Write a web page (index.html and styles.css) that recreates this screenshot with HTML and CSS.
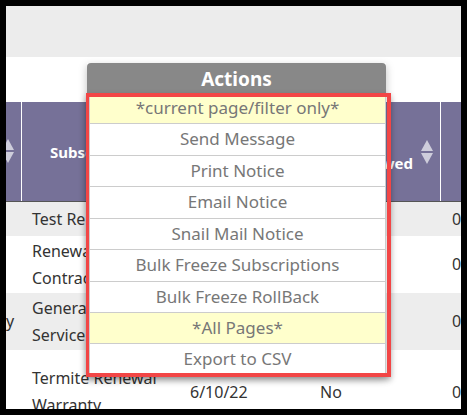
FILE: index.html
```html
<!DOCTYPE html>
<html>
<head>
<meta charset="utf-8">
<link rel="stylesheet" href="styles.css">
</head>
<body>
<div class="frame">
  <div class="topband"></div>
  <div class="spacer"></div>
  <div class="table">
    <div class="thead">
      <div class="th c1"><span class="sort"></span></div>
      <div class="th c2"><span class="htext">Subscription</span></div>
      <div class="th c3"></div>
      <div class="th c4"><span class="htext">Auto<br>Renewed</span><span class="sort"></span></div>
      <div class="th c5"></div>
    </div>
    <div class="tr gray">
      <div class="td c1"></div>
      <div class="td c2">Test Renewal</div>
      <div class="td c3"></div>
      <div class="td c4"></div>
      <div class="td c5">0</div>
    </div>
    <div class="tr">
      <div class="td c1"></div>
      <div class="td c2">Renewal<br>Contract</div>
      <div class="td c3"></div>
      <div class="td c4"></div>
      <div class="td c5">0</div>
    </div>
    <div class="tr gray">
      <div class="td c1">y</div>
      <div class="td c2">General<br>Service</div>
      <div class="td c3"></div>
      <div class="td c4"></div>
      <div class="td c5">0</div>
    </div>
    <div class="tr tall">
      <div class="td c1"></div>
      <div class="td c2">Termite Renewal<br>Warranty</div>
      <div class="td c3">6/10/22</div>
      <div class="td c4">No</div>
      <div class="td c5">0</div>
    </div>
  </div>

  <div class="actions">
    <div class="actions-head">Actions</div>
    <ul class="menu">
      <li class="note">*current page/filter only*</li>
      <li>Send Message</li>
      <li>Print Notice</li>
      <li>Email Notice</li>
      <li>Snail Mail Notice</li>
      <li>Bulk Freeze Subscriptions</li>
      <li>Bulk Freeze RollBack</li>
      <li class="note">*All Pages*</li>
      <li>Export to CSV</li>
    </ul>
  </div>
  <div class="highlight"></div>
</div>
</body>
</html>
```

FILE: styles.css
```css
html, body {
  margin: 0;
  padding: 0;
  background: #000;
}
body {
  width: 467px;
  height: 415px;
  padding: 6px;
  box-sizing: border-box;
  font-family: "Noto Sans", "Open Sans", sans-serif;
}
.frame {
  position: relative;
  width: 455px;
  height: 403px;
  background: #fff;
  overflow: hidden;
}
.topband {
  height: 51px;
  background: #ececec;
}
.spacer {
  height: 45px;
}
.table {
  width: 455px;
}
.thead {
  display: grid;
  grid-template-columns: 16px 158px 130px 131px 20px;
  height: 100px;
  background: #767198;
  border-bottom: 1px solid #555;
  box-sizing: border-box;
}
.th {
  display: flex;
  align-items: center;
  color: #fff;
  font-weight: bold;
  font-size: 15px;
  line-height: 22px;
  border-right: 1px solid #fff;
}
.th.c5 { border-right: none; }
.th.c2 { padding-left: 28px; }
.th.c4 { justify-content: flex-end; padding-right: 6px; }
.th.c4 .htext { margin-right: 8px; text-align: left; }
.sort {
  position: relative;
  width: 13px;
  height: 24px;
  flex: none;
}
.sort::before, .sort::after {
  content: "";
  position: absolute;
  left: 0;
  border-left: 6.5px solid transparent;
  border-right: 6.5px solid transparent;
}
.sort::before {
  top: 0;
  border-bottom: 11px solid #cecddb;
}
.sort::after {
  bottom: 0;
  border-top: 11px solid #cecddb;
}
.th.c1 .sort { margin-left: -4px; margin-top: -2px; }
.tr {
  display: grid;
  grid-template-columns: 16px 158px 130px 131px 20px;
  min-height: 34px;
  background: #fff;
}
.tr.gray { background: #ededed; }
.tr.tall { min-height: 84px; }
.td {
  padding: 1.5px 0 1.5px 10px;
  font-size: 16px;
  line-height: 27px;
  color: #333;
  display: flex;
  align-items: center;
  white-space: nowrap;
}
.td.c1 { padding-left: 0; }
.td.c5 { padding-left: 11px; }
.actions {
  position: absolute;
  left: 81px;
  top: 57px;
  width: 299px;
  box-shadow: 0 3px 8px rgba(0,0,0,0.25);
}
.actions-head {
  height: 30px;
  background: #888;
  color: #fff;
  font-weight: bold;
  font-size: 19px;
  line-height: 32px;
  text-align: center;
  border-radius: 4px 4px 0 0;
}
.menu {
  list-style: none;
  margin: 0 0 0 2px;
  padding: 0;
  background: #fff;
  border: 1px solid #ccc;
  border-top: none;
}
.menu li {
  height: 30.43px;
  line-height: 30.43px;
  border-bottom: 1px solid #ccc;
  text-align: center;
  color: #777;
  font-size: 17px;
  white-space: nowrap;
}
.menu li:last-child { border-bottom: none; }
.menu li.note { background: #ffffcc; }
.highlight {
  position: absolute;
  left: 80px;
  top: 87px;
  width: 305px;
  height: 284px;
  border: 4px solid #f24646;
  border-left-width: 3px;
  box-sizing: border-box;
  box-shadow: 0 3px 6px rgba(0,0,0,0.3);
}
```
